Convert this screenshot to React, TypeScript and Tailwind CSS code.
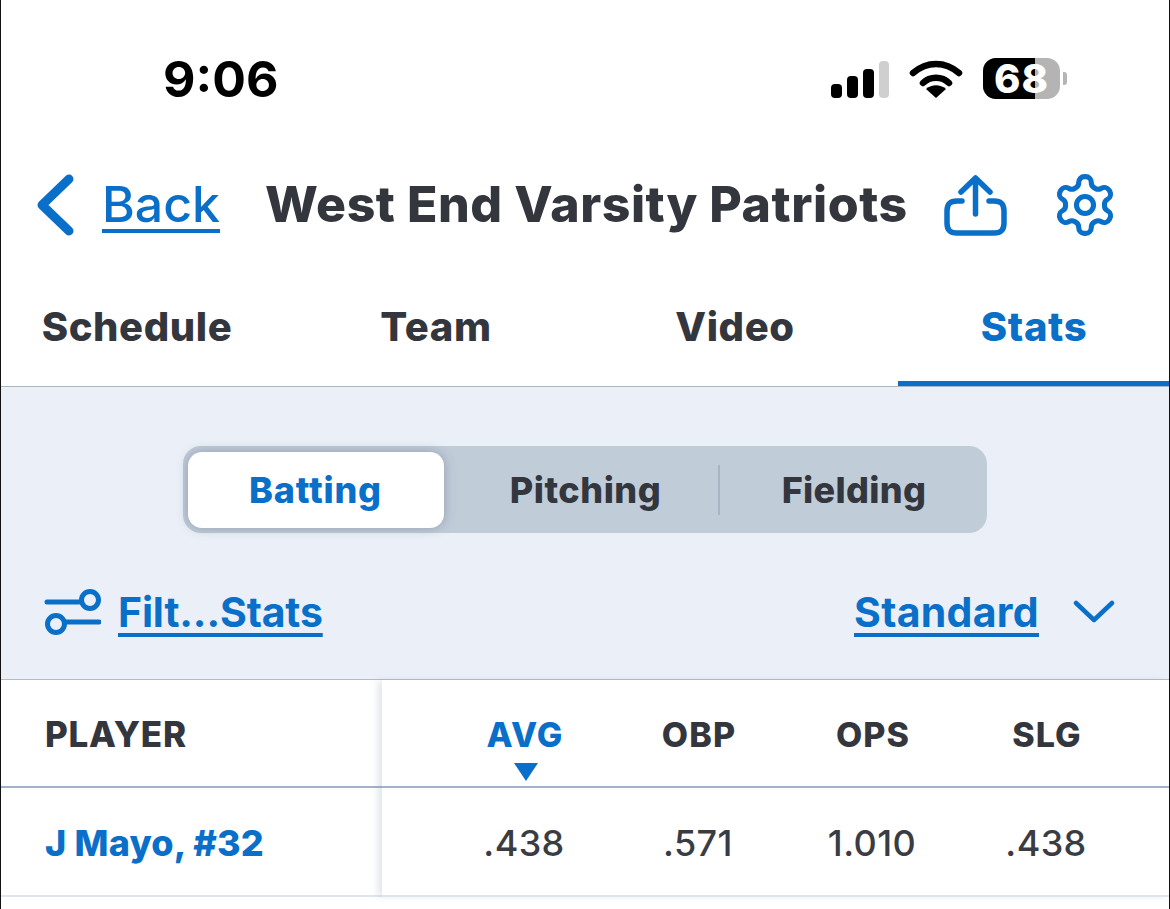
import React from "react";

const Blue = "text-[#0a6fc8]";

function Signal() {
  return (
    <svg width="60" height="38" viewBox="0 0 60 38" className="block">
      <rect x="1" y="24" width="11" height="14" rx="4" fill="#000" />
      <rect x="17" y="16" width="11" height="22" rx="4" fill="#000" />
      <rect x="33" y="9" width="11" height="29" rx="4" fill="#000" />
      <rect x="49" y="1" width="10" height="37" rx="4" fill="#cfcfcf" />
    </svg>
  );
}

function Wifi() {
  return (
    <svg width="54" height="38" viewBox="0 0 54 38" className="block">
      <path d="M4 13 C18 1 36 1 50 13" fill="none" stroke="#000" strokeWidth="6.500" strokeLinecap="round" strokeLinejoin="round" />
      <path d="M14 23 C21 16 33 16 40 23" fill="none" stroke="#000" strokeWidth="6.500" strokeLinecap="round" />
      <path d="M27 38 L17 29 C23 24 31 24 37 29 Z" fill="#000" />
    </svg>
  );
}

function Battery() {
  return (
    <div className="flex items-center">
      <div className="relative flex h-[41px] w-[77px] items-center justify-center rounded-[13px] bg-[#b4b4b4]">
        <div className="absolute inset-y-0 left-0 w-[52px] rounded-l-[13px] bg-black" />
        <span className="relative text-[40px] font-extrabold leading-none tracking-[1px] text-white">68</span>
      </div>
      <div className="ml-[3px] h-[13px] w-[4px] rounded-r-[3px] bg-[#b4b4b4]" />
    </div>
  );
}

function BackChevron() {
  return (
    <svg width="40" height="62" viewBox="0 0 40 62" className="block">
      <path d="M33 5 L6 31 L33 57" fill="none" stroke="#0a6fc8" strokeWidth="9" strokeLinecap="round" strokeLinejoin="round" />
    </svg>
  );
}

function Share() {
  return (
    <svg width="64" height="64" viewBox="0 0 64 64" className="block">
      <path d="M19 28 H14 C7 28 4 31 4 38 V50 C4 57 7 60 14 60 H51 C58 60 61 57 61 50 V38 C61 31 58 28 51 28 H46" fill="none" stroke="#0a6fc8" strokeWidth="5.5" strokeLinecap="round" />
      <path d="M32.500 41 V6 M18 19 L32.500 5 L47 19" fill="none" stroke="#0a6fc8" strokeWidth="5.500" strokeLinecap="round" strokeLinejoin="round" />
    </svg>
  );
}

function Gear() {
  return (
    <svg width="68" height="68" viewBox="0 0 24 24" className="block" fill="none" stroke="#0a6fc8" strokeWidth="1.800" strokeLinecap="round" strokeLinejoin="round">
      <path d="M12.22 2h-.44a2 2 0 0 0-2 2v.18a2 2 0 0 1-1 1.730l-.430.250a2 2 0 0 1-2 0l-.150-.080a2 2 0 0 0-2.730.730l-.220.380a2 2 0 0 0 .730 2.730l.150.100a2 2 0 0 1 1 1.720v.510a2 2 0 0 1-1 1.740l-.150.090a2 2 0 0 0-.730 2.730l.220.380a2 2 0 0 0 2.730.730l.150-.080a2 2 0 0 1 2 0l.430.250a2 2 0 0 1 1 1.730V20a2 2 0 0 0 2 2h.440a2 2 0 0 0 2-2v-.180a2 2 0 0 1 1-1.730l.430-.250a2 2 0 0 1 2 0l.150.080a2 2 0 0 0 2.730-.730l.220-.390a2 2 0 0 0-.730-2.730l-.150-.080a2 2 0 0 1-1-1.740v-.500a2 2 0 0 1 1-1.740l.150-.090a2 2 0 0 0 .730-2.730l-.220-.380a2 2 0 0 0-2.730-.730l-.150.080a2 2 0 0 1-2 0l-.430-.250a2 2 0 0 1-1-1.730V4a2 2 0 0 0-2-2z" />
      <circle cx="12" cy="12" r="3" />
    </svg>
  );
}

function FilterIcon() {
  return (
    <svg width="58" height="46" viewBox="0 0 58 46" className="block" fill="none" stroke="#0a6fc8" strokeWidth="5" strokeLinecap="round">
      <path d="M4 13 H36" />
      <circle cx="47" cy="11" r="8.500" />
      <path d="M22 33 H56" />
      <circle cx="13" cy="35" r="8.500" />
    </svg>
  );
}

function ChevronDown() {
  return (
    <svg width="42" height="24" viewBox="0 0 42 24" className="block">
      <path d="M3 3 L21 20 L39 3" fill="none" stroke="#0a6fc8" strokeWidth="4.500" strokeLinecap="round" strokeLinejoin="round" />
    </svg>
  );
}

function StatCell({ children, className = "" }: { children: React.ReactNode; className?: string }) {
  return <div className={`flex items-center justify-center ${className}`}>{children}</div>;
}

export default function App() {
  const tabs = ["Schedule", "Team", "Video", "Stats"];
  return (
    <div className="h-[909px] w-[1170px] overflow-hidden border-x-[1.500px] border-[#111] bg-white font-['Inter',sans-serif] text-[#34363d]">
      {/* status bar */}
      <div className="flex h-[138px] items-start justify-between pl-[162px] pr-[102px] pt-[50px]">
        <div className="text-[50px] font-bold leading-[58px] text-black">9:06</div>
        <div className="flex items-center pt-[8px]">
          <Signal />
          <div className="ml-[19px]"><Wifi /></div>
          <div className="ml-[20px]"><Battery /></div>
        </div>
      </div>

      {/* nav */}
      <div className="flex h-[134px] items-center pl-[35px] pr-[50px]">
        <BackChevron />
        <a className={`ml-[26px] pb-[2px] text-[50px] font-medium leading-[58px] underline decoration-[3.500px] underline-offset-[7px] ${Blue}`}>Back</a>
        <div className="ml-[45px] whitespace-nowrap pb-[2px] text-[50px] font-extrabold leading-[56px] tracking-[0.55px]">West End Varsity Patriots</div>
        <div className="ml-auto flex items-center gap-[44px]">
          <Share />
          <Gear />
        </div>
      </div>

      {/* tabs */}
      <div className="grid h-[115px] grid-cols-[272px_272px_272px_272px] gap-x-[27px] border-b border-[#a9b6c6]">
        {tabs.map((t) => (
          <div
            key={t}
            className={`flex items-center justify-center pb-[5px] text-[40px] font-extrabold tracking-[0.6px] ${
              t === "Stats" ? `border-b-[5px] border-[#0a6fc8] pt-[5px] ${Blue}` : ""
            }`}
          >
            {t}
          </div>
        ))}
      </div>

      {/* controls */}
      <div className="h-[293px] border-b border-[#b1bccb] bg-[#ebf0f8] pt-[59px]">
        <div className="ml-[181.500px] flex h-[87px] w-[804px] items-center rounded-[18px] bg-[#c1ccd9] pl-[5px]">
          <div className={`flex h-[76px] w-[256px] items-center justify-center rounded-[14px] bg-white text-[36px] font-extrabold tracking-[0.8px] shadow-[0_0_12px_rgba(90,105,125,0.45)] ${Blue}`}>
            Batting
          </div>
          <div className="flex flex-1 items-center">
            <div className="flex h-[50px] flex-1 items-center justify-center pl-[10px] text-[36px] font-extrabold tracking-[0.5px]">Pitching</div>
            <div className="h-[50px] w-[2px] bg-[#a9b5c3]" />
            <div className="flex h-[50px] w-[267px] items-center justify-center pl-[2px] text-[36px] font-extrabold tracking-[0.3px]">Fielding</div>
          </div>
        </div>
        <div className="mt-[55px] flex items-center pl-[42px] pr-[54px]">
          <FilterIcon />
          <a className={`ml-[17px] text-[41px] font-bold leading-[48px] tracking-[-0.15px] underline decoration-[3.500px] underline-offset-[6px] ${Blue}`}>Filt...Stats</a>
          <a className={`ml-auto text-[41px] font-bold leading-[48px] tracking-[0.3px] underline decoration-[3.500px] underline-offset-[6px] ${Blue}`}>Standard</a>
          <div className="ml-[34px]"><ChevronDown /></div>
        </div>
      </div>

      {/* table */}
      <div className="-mt-px grid grid-cols-[381px_1fr]">
        <div>
          <div className="flex h-[109px] items-center border-b-[2.500px] border-[#a4b2c9] pl-[44px] pt-[3px] text-[35px] font-extrabold tracking-[0.7px]">PLAYER</div>
          <div className={`flex h-[109px] items-center border-b-2 border-[#dfe5ee] pl-[44px] pt-[3px] text-[36px] font-extrabold tracking-[0.2px] ${Blue}`}>J Mayo, #32</div>
        </div>
        <div className="mt-px shadow-[-5px_0_7px_-1px_rgba(120,135,160,0.22)]">
          <div className="grid h-[108px] grid-cols-[174px_174px_174px_174px] border-b-[2.500px] border-[#a4b2c9] pl-[56px] pt-[3px] text-[34px] font-extrabold tracking-[1.1px]">
            <StatCell className={`relative ${Blue}`}>
              <span>AVG</span>
              <svg width="26" height="20" viewBox="0 0 26 20" className="absolute bottom-[4px] left-[75px]">
                <path d="M1 1 H25 L13 19 Z" fill="#0a6fc8" />
              </svg>
            </StatCell>
            <StatCell>OBP</StatCell>
            <StatCell>OPS</StatCell>
            <StatCell>SLG</StatCell>
          </div>
          <div className="grid h-[109px] grid-cols-[174px_174px_174px_174px] items-center border-b-2 border-[#dfe5ee] pl-[55px] pt-[3px] text-[36px] font-[450] tracking-[0.4px] text-[#3a3c43]">
            <StatCell>.438</StatCell>
            <StatCell>.571</StatCell>
            <StatCell>1.010</StatCell>
            <StatCell>.438</StatCell>
          </div>
        </div>
      </div>
    </div>
  );
}
